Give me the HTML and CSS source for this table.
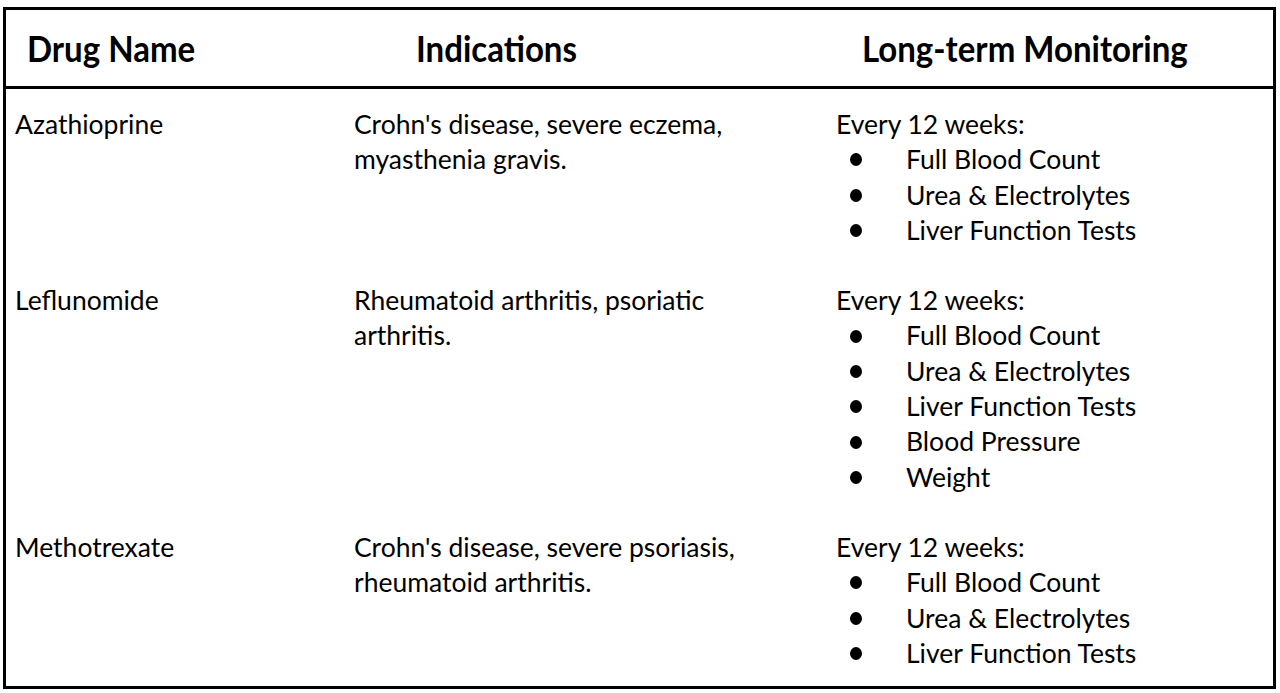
FILE: index.html
```html
<!DOCTYPE html>
<html lang="en">
<head>
<meta charset="utf-8">
<title>Drug Monitoring</title>
<link rel="stylesheet" href="styles.css">
</head>
<body>
<div class="sheet">
  <div class="table">
    <div class="row head">
      <div class="cell hc1"><span class="ht">Drug Name</span></div>
      <div class="cell hc2"><span class="ht">Indications</span></div>
      <div class="cell hc3"><span class="ht">Long-term Monitoring</span></div>
    </div>
    <div class="row body">
      <div class="cell"><span class="line">Azathioprine</span></div>
      <div class="cell"><span class="line">Crohn's disease, severe eczema,</span><span class="line">myasthenia gravis.</span></div>
      <div class="cell">
        <span class="line">Every 12 weeks:</span>
        <ul class="tests">
          <li class="line">Full Blood Count</li>
          <li class="line">Urea &amp; Electrolytes</li>
          <li class="line">Liver Function Tests</li>
        </ul>
      </div>
    </div>
    <div class="row body">
      <div class="cell"><span class="line">Leflunomide</span></div>
      <div class="cell"><span class="line">Rheumatoid arthritis, psoriatic</span><span class="line">arthritis.</span></div>
      <div class="cell">
        <span class="line">Every 12 weeks:</span>
        <ul class="tests">
          <li class="line">Full Blood Count</li>
          <li class="line">Urea &amp; Electrolytes</li>
          <li class="line">Liver Function Tests</li>
          <li class="line">Blood Pressure</li>
          <li class="line">Weight</li>
        </ul>
      </div>
    </div>
    <div class="row body last">
      <div class="cell"><span class="line">Methotrexate</span></div>
      <div class="cell"><span class="line">Crohn's disease, severe psoriasis,</span><span class="line">rheumatoid arthritis.</span></div>
      <div class="cell">
        <span class="line">Every 12 weeks:</span>
        <ul class="tests">
          <li class="line">Full Blood Count</li>
          <li class="line">Urea &amp; Electrolytes</li>
          <li class="line">Liver Function Tests</li>
        </ul>
      </div>
    </div>
  </div>
</div>
</body>
</html>
```

FILE: styles.css
```css
html, body {
  margin: 0;
  padding: 0;
  background: #ffffff;
}

body {
  font-family: "Lato", "Liberation Sans", sans-serif;
  color: #000000;
}

.sheet {
  padding: 7px 0 0 3px;
}

.table {
  width: 1273px;
  box-sizing: border-box;
  border: 3px solid #000;
}

.row {
  display: grid;
  grid-template-columns: 339px 482px 1fr;
}

.head {
  height: 79px;
  box-sizing: border-box;
  border-bottom: 3px solid #000;
  align-items: center;
}

.ht {
  display: inline-block;
  font-weight: 700;
  font-size: 33px;
  line-height: 36px;
  transform: scaleY(1.08);
}

.hc1 { padding-left: 21px; }
.hc2 { padding-left: 71px; }
.hc3 { padding-left: 35px; }

.body .cell {
  padding: 18px 0 17px 9px;
  white-space: nowrap;
}

.body.last .cell {
  padding-bottom: 15px;
}

.line {
  display: block;
  font-size: 26.5px;
  line-height: 35.3px;
}

.tests {
  list-style: none;
  margin: 0;
  padding: 0;
}

.tests li {
  display: flex;
  align-items: center;
}

.tests li::before {
  content: "";
  width: 12px;
  height: 13px;
  border-radius: 50%;
  background: #000;
  margin-left: 14px;
  margin-right: 44px;
  flex: none;
}
```
